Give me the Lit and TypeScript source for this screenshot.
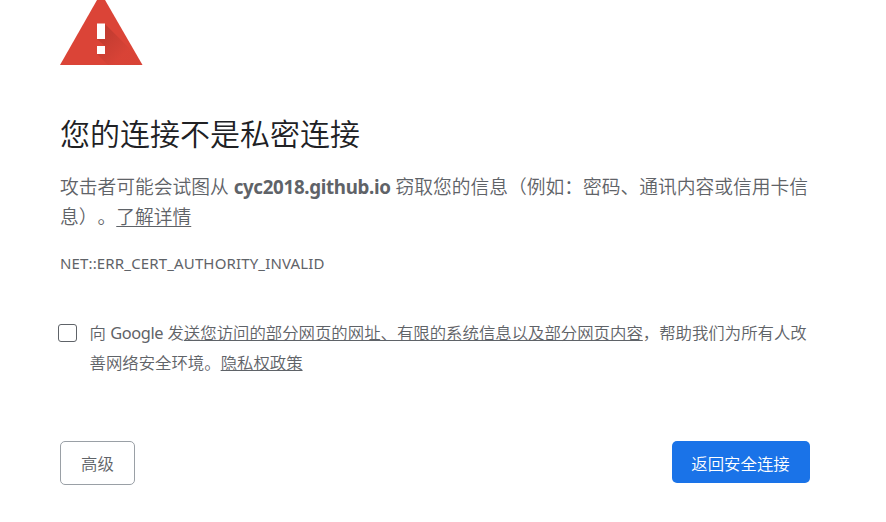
import { LitElement, html, css } from "lit";
import { customElement } from "lit/decorators.js";

@customElement("app-root")
export class AppRoot extends LitElement {
  static styles = css`
    :host { display: block; height: 522px; overflow: hidden; background: #fff; color: #5f6368; font-family: "Noto Sans", "Noto Sans CJK SC", sans-serif; font-weight: 350; text-spacing-trim: space-all; }
    main { padding: 0 76px 0 60px; white-space: nowrap; }
    .icon { display: block; width: 84px; height: 66px; }
    h1 { margin: 46px 0 0; font-size: 30px; line-height: 44px; font-weight: 350; color: #202124; }
    p { margin: 0; }
    .body { margin-top: 16px; font-size: 18.75px; line-height: 30px; }
    b { font-weight: 700; letter-spacing: -0.33px; }
    .code { margin-top: 21px; font-size: 15px; line-height: 20px; font-weight: 400; letter-spacing: 0.15px; }
    .opt { display: flex; margin-top: 45px; gap: 12.5px; margin-left: -2px; font-size: 16.4px; line-height: 30px; }
    .box { box-sizing: border-box; width: 19px; height: 18px; margin-top: 6px; border: 1px solid #5f6368; border-radius: 3px; flex: none; }
    .brand { font-weight: 400; letter-spacing: -0.38px; }
    .link { text-decoration: underline; text-underline-offset: 2px; text-decoration-thickness: 1px; text-decoration-skip-ink: none; }
    .opt .link { text-underline-offset: 1px; }
    .line { display: block; }
    .actions { display: flex; justify-content: space-between; margin-top: 63px; }
    button { box-sizing: border-box; font: inherit; font-size: 16.4px; padding: 0; border-radius: 5px; }
    .adv { width: 75px; height: 44px; background: #fff; border: 1px solid #9aa0a6; color: #5f6368; }
    .back { width: 138px; height: 42px; background: #1a73e8; border: 0; color: #fff; padding: 2px 1px 0 0; }
  `;

  render() {
    return html`<main>
      <svg class="icon" viewBox="0 0 84 66">
        <defs>
          <linearGradient id="shade" gradientUnits="userSpaceOnUse" x1="40" y1="34" x2="62" y2="56"><stop offset="0" stop-color="#9c2f27" stop-opacity=".42"/><stop offset="1" stop-color="#9c2f27" stop-opacity="0.04"/></linearGradient>
          <clipPath id="tri"><path d="M41 -7L82.5 65H0Z"/></clipPath>
        </defs>
        <path d="M41 -7L82.5 65H0Z" fill="#db4437"/>
        <path clip-path="url(#tri)" d="M45 24L86 65H48L37 54L45 46L37 39Z" fill="url(#shade)"/>
        <path d="M37 23.5h8v15.5h-8zM37 46h8v8h-8z" fill="#fff"/>
      </svg>
      <h1>您的连接不是私密连接</h1>
      <p class="body"><span class="line">攻击者可能会试图从 <b>cyc2018.github.io</b> 窃取您的信息（例如：密码、通讯内容或信用卡信</span><span class="line">息）。<span class="link">了解详情</span></span></p>
      <p class="code">NET::ERR_CERT_AUTHORITY_INVALID</p>
      <div class="opt"><span class="box"></span><div><span class="line">向 <span class="brand">Google</span> 发<span class="link">送您访问的部分网页的网址、有限的系统信息以及部分网页内容</span>，帮助我们为所有人改</span><span class="line">善网络安全环境。<span class="link">隐私权政策</span></span></div></div>
      <div class="actions"><button class="adv">高级</button><button class="back">返回安全连接</button></div>
    </main>`;
  }
}
